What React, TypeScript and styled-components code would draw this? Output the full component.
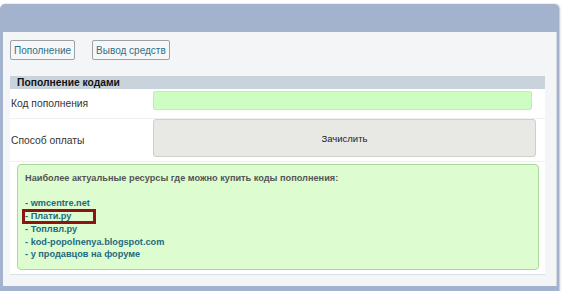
import styled, { createGlobalStyle } from "styled-components";

const GlobalStyle = createGlobalStyle`
  body {
    margin: 0;
    background: #fff;
    font-family: "Liberation Sans", Arial, sans-serif;
  }
`;

const Frame = styled.div`
  margin-top: 4px;
  width: 554px;
  padding: 28px 2px 8px 3px;
  background: #a4b3cd;
  border-radius: 5px 5px 0 0;
  box-shadow: 1px 0 2px rgba(0, 0, 0, 0.25);
`;

const Panel = styled.div`
  background: #f4f5f6;
  border-right: 1px solid #d3d7de;
  padding: 8px 11px 11px 7px;
`;

const Toolbar = styled.div`
  display: flex;
  gap: 17px;
`;

const TabButton = styled.button`
  height: 20px;
  padding: 0 3px;
  background: #f6f7f8;
  border: 1px solid #9aa2a8;
  border-radius: 2px;
  color: #2f7088;
  font-family: inherit;
  font-size: 10px;
`;

const SectionTitle = styled.div`
  margin-top: 16px;
  height: 13px;
  line-height: 13px;
  padding-left: 7px;
  background: #c9d3dc;
  font-size: 10.3px;
  font-weight: bold;
  color: #111;
`;

const Table = styled.div`
  background: #fff;
  border-bottom: 1px solid #dcdfe3;
  padding-bottom: 4px;
`;

const Row = styled.div<{ $h: number }>`
  display: grid;
  grid-template-columns: 140px 1fr;
  height: ${(p) => p.$h}px;
  border-bottom: 1px solid #f0f0f0;
`;

const Label = styled.div`
  display: flex;
  align-items: center;
  padding-left: 1px;
  font-size: 10.3px;
  color: #333;
`;

const Cell = styled.div<{ $pad: string }>`
  padding: ${(p) => p.$pad};
`;

const CodeInput = styled.input`
  box-sizing: border-box;
  width: 100%;
  height: 19px;
  background: #cdfdc0;
  border: 1px solid #c2ecb4;
  border-radius: 2px;
  outline: none;
`;

const SubmitButton = styled.button`
  width: 100%;
  height: 38px;
  background: #e8e8e5;
  border: 1px solid #cfcfcc;
  border-radius: 3px;
  font-family: inherit;
  font-size: 9.5px;
  color: #222;
`;

const Note = styled.div`
  margin: 2px 6px 0 7px;
  padding: 7px 7px 8px;
  background: #ddfcd0;
  border: 1px solid #a9d99c;
  border-radius: 4px;
  font-size: 9.2px;
  font-weight: bold;
  line-height: 12.7px;
`;

const NoteTitle = styled.div`
  color: #555;
  margin-bottom: 12.7px;
`;

const Link = styled.div`
  position: relative;
  color: #1f6b80;
`;

const Mark = styled.span`
  position: absolute;
  left: -3px;
  top: -1px;
  width: 74px;
  height: 15px;
  box-sizing: border-box;
  border: 3px solid #8e1414;
`;

const links = [
  "wmcentre.net",
  "Плати.ру",
  "Топлвл.ру",
  "kod-popolnenya.blogspot.com",
  "у продавцов на форуме",
];

export default function App() {
  return (
    <>
      <GlobalStyle />
      <Frame>
        <Panel>
          <Toolbar>
            <TabButton>Пополнение</TabButton>
            <TabButton>Вывод средств</TabButton>
          </Toolbar>
          <SectionTitle>Пополнение кодами</SectionTitle>
          <Table>
            <Row $h={29}>
              <Label>Код пополнения</Label>
              <Cell $pad="2px 13px 0 3px">
                <CodeInput />
              </Cell>
            </Row>
            <Row $h={42}>
              <Label>Способ оплаты</Label>
              <Cell $pad="0 9px 0 3px">
                <SubmitButton>Зачислить</SubmitButton>
              </Cell>
            </Row>
            <Note>
              <NoteTitle>
                Наиболее актуальные ресурсы где можно купить коды пополнения:
              </NoteTitle>
              {links.map((l, i) => (
                <Link key={l}>
                  - {l}
                  {i === 1 && <Mark />}
                </Link>
              ))}
            </Note>
          </Table>
        </Panel>
      </Frame>
    </>
  );
}
